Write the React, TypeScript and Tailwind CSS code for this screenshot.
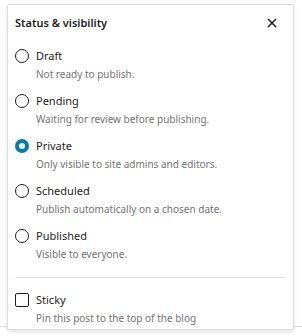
const options = [
  { label: "Draft", desc: "Not ready to publish." },
  { label: "Pending", desc: "Waiting for review before publishing." },
  { label: "Private", desc: "Only visible to site admins and editors." },
  { label: "Scheduled", desc: "Publish automatically on a chosen date." },
  { label: "Published", desc: "Visible to everyone." },
];

const Radio = ({ checked }: { checked: boolean }) =>
  checked ? (
    <span className="mt-[2px] box-border flex h-[14px] w-[14px] shrink-0 rounded-full border-[4px] border-[#007cba] bg-white" />
  ) : (
    <span className="mt-[2px] box-border flex h-[14px] w-[14px] shrink-0 rounded-full border-[1.5px] border-[#1e1e1e] bg-white" />
  );

const App = () => {
  return (
    <div className="relative h-[336px] w-[302px] bg-white font-['Noto_Sans',sans-serif]">
      <div className="absolute left-0 right-0 top-[322px] h-px bg-[#dcdcdc]" />
      <div className="relative ml-[7px] mt-[4px] flex h-[326px] w-[287px] flex-col rounded-[2px] border border-[#dddddd] bg-white px-[7px] pt-[7px] shadow-[0_2px_4px_rgba(0,0,0,0.12)]">
        <div className="flex h-[22px] items-center justify-between">
          <div className="text-[11px] font-semibold text-[#1e1e1e]">Status &amp; visibility</div>
          <button className="mr-[6px] flex h-[16px] w-[16px] items-center justify-center">
            <svg width="10" height="10" viewBox="0 0 10 10">
              <path d="M1 1L9 9M9 1L1 9" stroke="#1e1e1e" strokeWidth="1.5" />
            </svg>
          </button>
        </div>
        <div className="mt-[13px] flex flex-col gap-[9px]">
          {options.map((o) => (
            <div key={o.label} className="flex gap-[7px]">
              <Radio checked={o.label === "Private"} />
              <div className="flex flex-col">
                <div className="text-[11px] leading-[18px] text-[#1e1e1e]">{o.label}</div>
                <div className="text-[10px] leading-[18px] text-[#757575]">{o.desc}</div>
              </div>
            </div>
          ))}
        </div>
        <div className="mt-[14px] h-px bg-[#e0e0e0]" />
        <div className="mt-[13px] flex gap-[7px]">
          <span className="mt-[2px] box-border h-[14px] w-[14px] shrink-0 rounded-[2px] border-[1.5px] border-[#1e1e1e] bg-white" />
          <div className="flex flex-col">
            <div className="text-[11px] leading-[18px] text-[#1e1e1e]">Sticky</div>
            <div className="text-[10px] leading-[18px] text-[#757575]">Pin this post to the top of the blog</div>
          </div>
        </div>
      </div>
    </div>
  );
};

export default App;
